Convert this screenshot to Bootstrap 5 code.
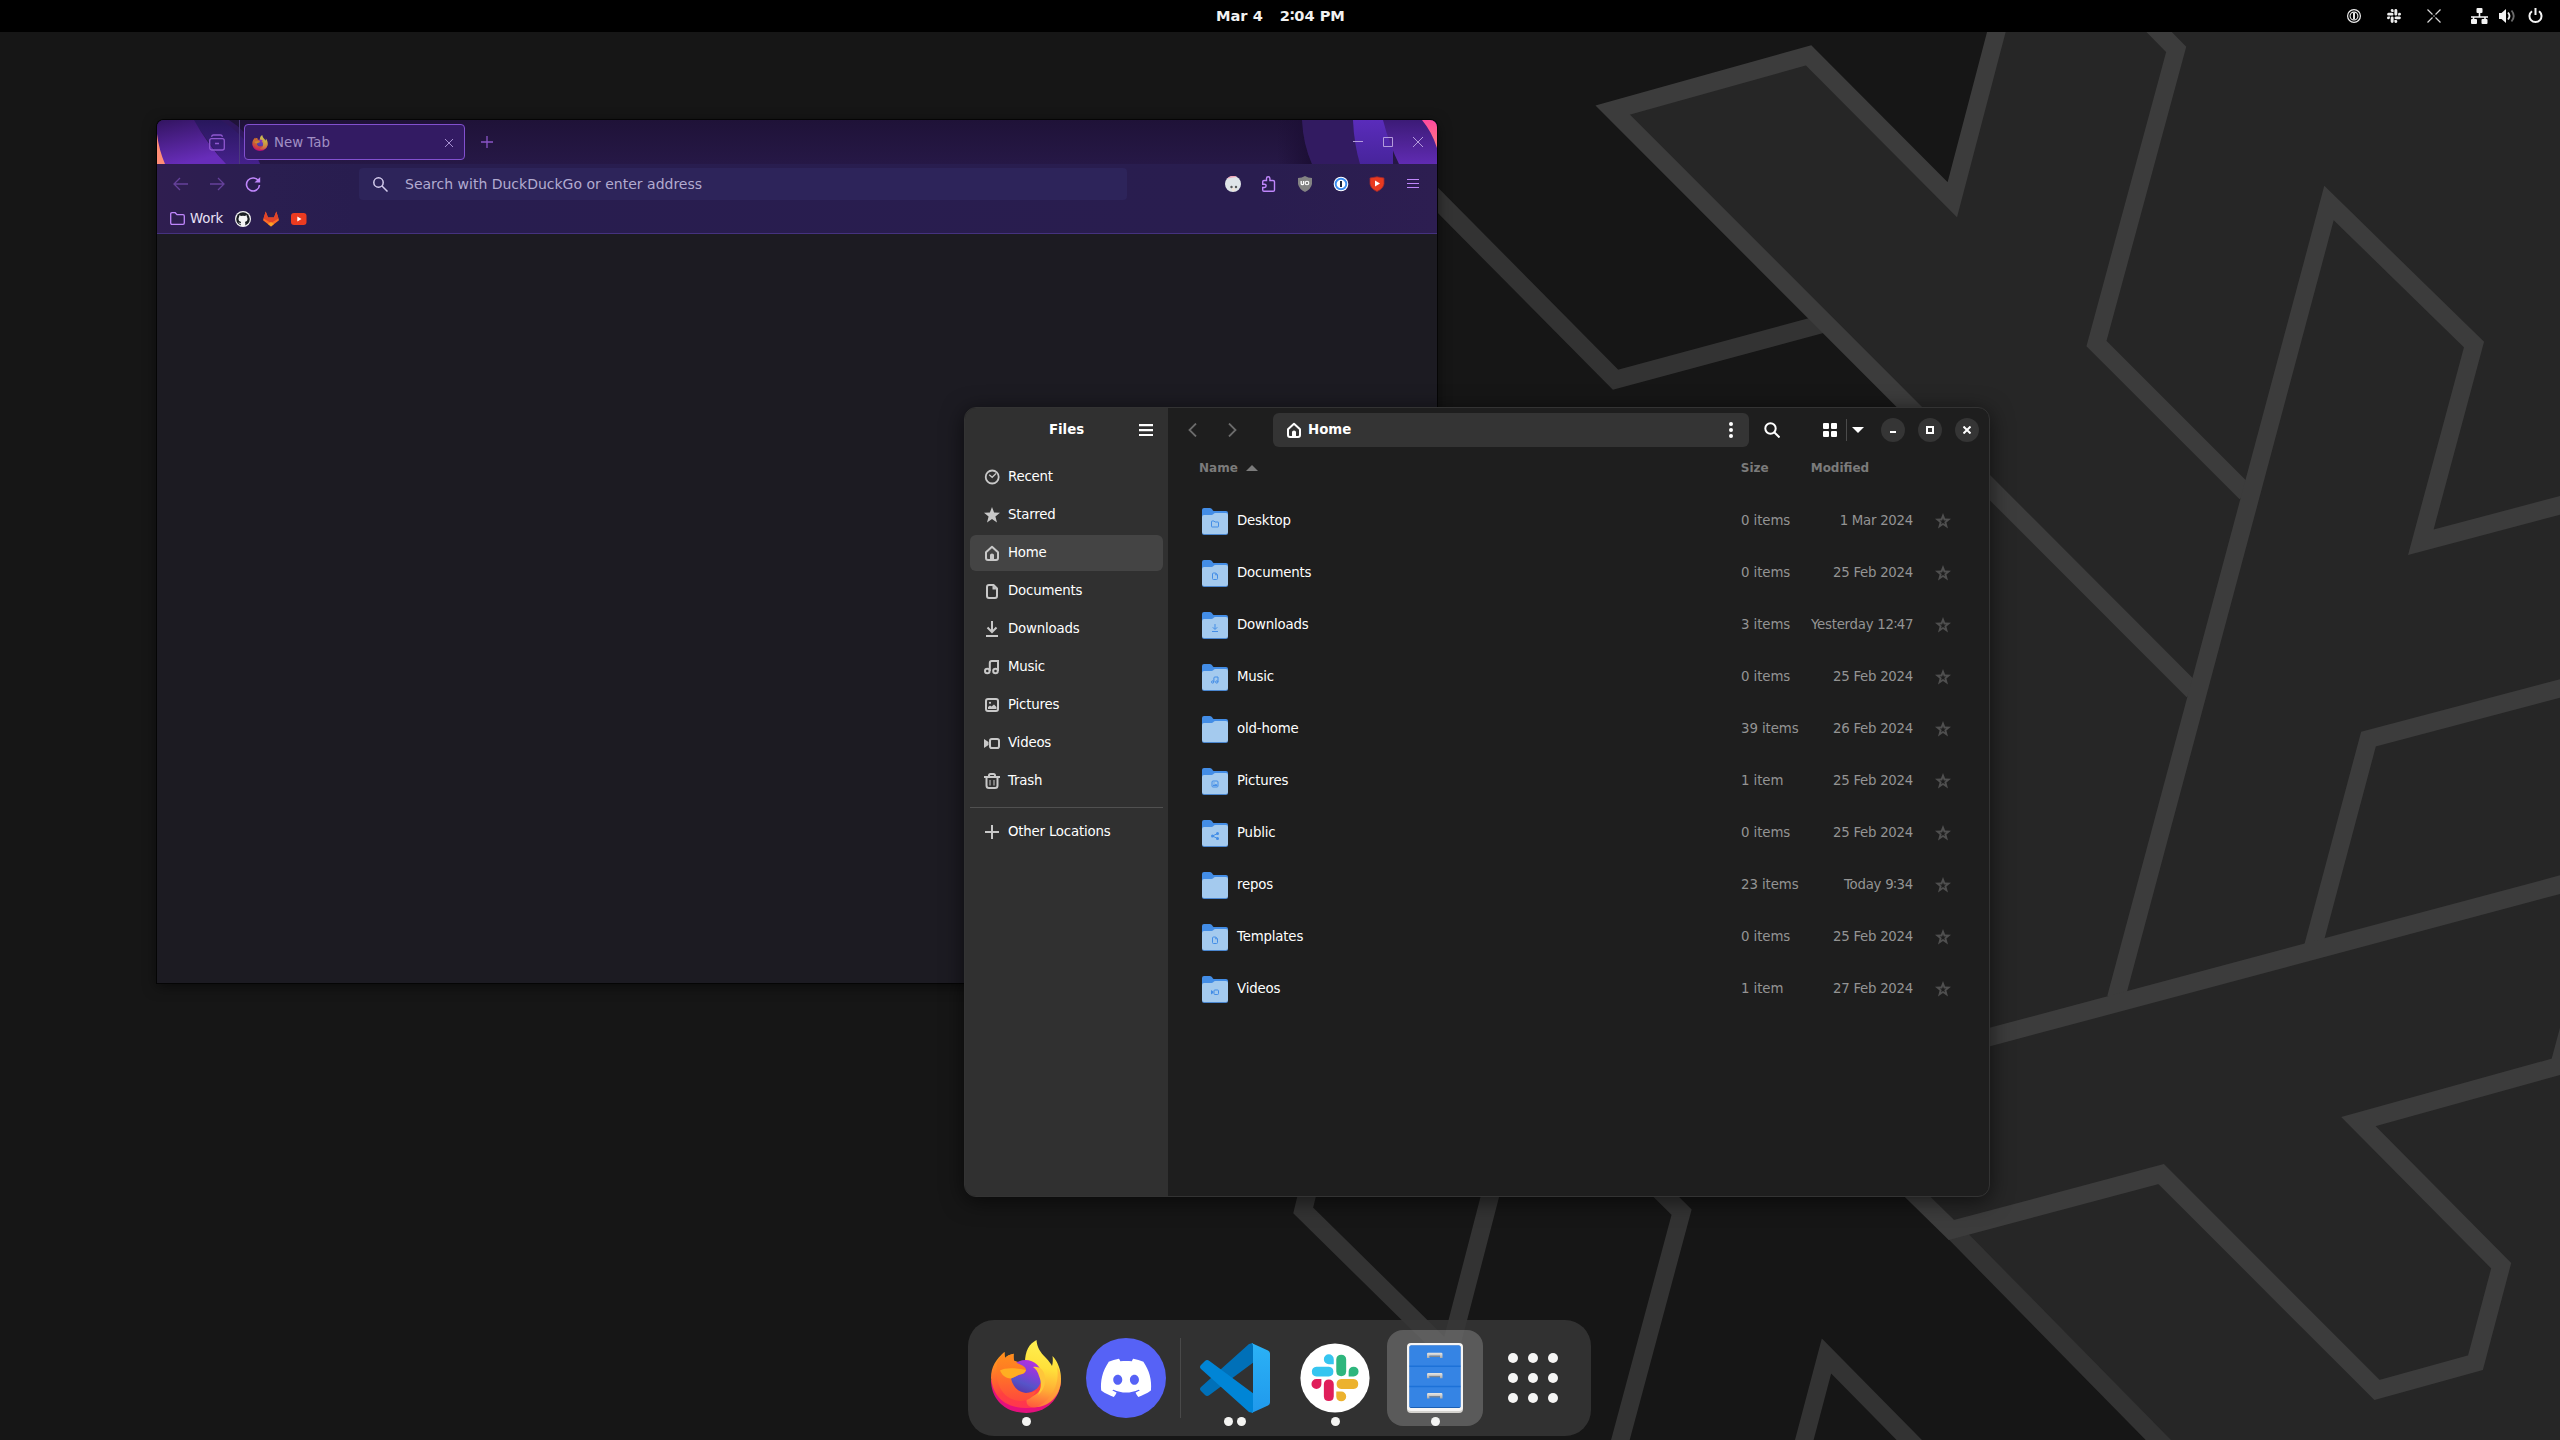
<!DOCTYPE html>
<html lang="en">
<head>
<meta charset="utf-8">
<title>Desktop</title>
<meta name="viewport" content="width=device-width, initial-scale=1">
<link href="https://cdn.jsdelivr.net/npm/bootstrap@5.3.0/dist/css/bootstrap.min.css" rel="stylesheet">
<style>
html,body{height:100%}
body{font-family:"DejaVu Sans",sans-serif;font-size:13.33px;line-height:16px;background:#161616;color:#fff;overflow:hidden}
svg{display:block;flex:none}
.desk{width:2560px;height:1440px}
.wall{left:0;top:0;z-index:0}
.topbar{height:32px;background:#000;z-index:5;font-size:14.6px;font-weight:700;color:#f2f2f2}
.tb-side{width:1216px}
.tb-clock{gap:17px}
.tb-tray{padding-right:17px}
/* browser window */
.ff{left:157px;top:120px;width:1280px;height:863px;background:#1c1b22;border-radius:7px 7px 0 0;box-shadow:0 0 0 1px #050505,0 3px 14px rgba(0,0,0,.55);z-index:1}
.ff-clip{border-radius:7px 7px 0 0}
.ff-tabs{height:44px;background:linear-gradient(#1f1238,#261846)}
.ff-art{left:0;top:0}
.ff-tabs>div{z-index:1}
.ff-lead{width:83px;padding-left:52px;border-right:1px solid #4b3a7c}
.ff-tab{width:221px;height:36px;margin-left:4px;border:1px solid #8250cf;border-radius:4px;background:#331b63;color:#a18fc4;padding:1px 11px 0 7px}
.ff-tab span{padding:1px 0 0 2px}
.ff-bars{height:70px;background:linear-gradient(90deg,#2f1e50 0,#2a1e50 110px,#281d4f 200px,#291d4f 1100px,#2d1e51 1280px);border-bottom:1px solid #45327f}
.ff-nav{height:40px;padding:4px 16px 4px 16px}
.ff-url{width:768px;height:32px;background:#2d245a;border-radius:4px;color:#b2abd0;font-size:14px;padding-left:14px;margin-left:98px}
.ff-marks{height:28px;padding:1px 0 0 13px;color:#e9e2f6;letter-spacing:-.15px}
/* file manager */
.fm{left:964px;top:407px;width:1026px;height:790px;border-radius:12px;background:#1e1e1e;border:1px solid #333;box-shadow:0 4px 22px rgba(0,0,0,.6);z-index:2}
.fm-side{width:203px;background:#303030;border-radius:11px 0 0 11px}
.fm-head{height:44px}
.fm-side .fm-head{padding-right:15px}
.fm-main-head{padding:0 10px 0 20px}
.fm-list{padding:7px 5px 0 5px;letter-spacing:-.2px}
.place{height:36px;margin-bottom:2px;padding-left:14px;gap:8px;border-radius:6px;color:#fff}
.place svg{color:#c8c8c8}
.place.sel{background:#444}
.rule-line{height:1px;background:#505050;margin:8px 0 6px}
.fm-title{margin-left:38px;padding-right:9px}
.pathbar{width:476px;height:34px;background:#343434;border-radius:6px;padding:0 13px 0 13px;font-weight:700}
.pathbar span{margin-left:6px}
.vsep{width:1px;height:22px;background:#4b4b4b;margin-left:9px}
.wbtns{gap:13px}
.wbtn{width:24px;height:24px;border-radius:50%;background:#353535}
.fm-cols{height:34px;font-size:12px;font-weight:700;color:#7b7b7b;padding:0 0 2px 31px}
.fm-files{padding-top:9px;letter-spacing:-.18px}
.frow{height:52px;padding-left:34px}
.frow .nm{width:513px;padding-left:9px}
.dim{color:#949494}
.c-size{width:70px;letter-spacing:-.08px}
.c-date{width:102px;text-align:right;white-space:nowrap;letter-spacing:-.27px}
.star{color:#4f4f4f;margin-left:22px}
.emblem{color:#438de6}
/* dock */
.dock{left:968px;top:1320px;width:623px;height:116px;border-radius:26px;background:rgba(55,55,55,.82);padding:10px 0 0 10px;z-index:3}
.app{width:96px;height:96px;border-radius:16px;position:relative}
.app+.app,.appgrid{margin-left:4px}
.appgrid{width:92px;height:96px}
.app.on{background:rgba(255,255,255,.2)}
.app .dots{left:0;right:0;bottom:0;gap:4px}
.app .dots i{width:9px;height:9px;border-radius:50%;background:#f4f4f2}
.dsep{width:1px;height:80px;background:#494949;margin:8px 6px 0}
</style>
<script src="https://cdn.jsdelivr.net/npm/bootstrap@5.3.0/dist/js/bootstrap.bundle.min.js"></script>
</head>
<body>
<!-- shared icon symbols -->
<svg width="0" height="0" class="position-absolute">
<defs>
<linearGradient id="gBody" x1=".15" y1=".1" x2=".45" y2="1"><stop offset="0" stop-color="#ff9a1f"/><stop offset=".35" stop-color="#ff6b2c"/><stop offset=".65" stop-color="#ff4040"/><stop offset="1" stop-color="#ff3550"/></linearGradient>
<linearGradient id="gGlobe" x1=".7" y1="0" x2=".3" y2="1"><stop offset="0" stop-color="#b62fe0"/><stop offset=".4" stop-color="#8340d8"/><stop offset=".7" stop-color="#5654c8"/><stop offset="1" stop-color="#5b35a8"/></linearGradient>
<linearGradient id="gHead" x1=".2" y1="0" x2=".2" y2="1"><stop offset="0" stop-color="#ff8f1c"/><stop offset=".4" stop-color="#ff7a24"/><stop offset="1" stop-color="#ff4a3c"/></linearGradient>
<linearGradient id="gFlame" x1=".4" y1="0" x2=".3" y2="1"><stop offset="0" stop-color="#fff152"/><stop offset=".4" stop-color="#ffe03a"/><stop offset=".72" stop-color="#ffac35"/><stop offset="1" stop-color="#ff5a3e"/></linearGradient>
<linearGradient id="gSlab" x1="0" y1="0" x2="0" y2="1"><stop offset="0" stop-color="#2bb2f6"/><stop offset="1" stop-color="#2099ec"/></linearGradient>
<linearGradient id="gHandle" x1="0" y1="0" x2="0" y2="1"><stop offset="0" stop-color="#e8e8e6"/><stop offset="1" stop-color="#a9a9a9"/></linearGradient>
<symbol id="firefox" viewBox="0 0 70 73">
<path fill="#e4107c" d="M0 40C0 60 15 73 35 73s35-14 35-34z"/>
<path fill="url(#gBody)" d="M0 38C0 27 5 19 13.500 12c0 2 0 4 .5 6 2-2 5-3.500 8.700-4.200-.3 2.500-.2 5 .3 6.700L50 30l18 18C62 62 49 68 35 68 16 68 2 58 0 38z"/>
<path fill="url(#gFlame)" d="M34 23C34 11 38 4 45.500 0 46 7 49 12 55 18c3 3 5 6 6 8 1-3 1-7 .5-10C67 22 70 30 70 39 70 54 60 66 44 67.500 38 68 34 64 36 58 48 56 54 46 51 34 47 28 41 24 34 23z"/>
<path fill="#ff9a3a" opacity=".45" d="M66 27c3 16-4 32-20 40 14-1 24-12 24-28 0-4-1-8-4-12z"/>
<circle cx="34.500" cy="36.500" r="16.500" fill="url(#gGlobe)"/>
<path fill="#ffc63a" d="M42 27c5-1 9 1 11 6 3 9 0 17-6 22 3-6 4-12 1-19-1-4-3-7-6-9z"/>
<path fill="url(#gHead)" d="M6 22C8 18 10 15 13.500 12c0 2 0 4 .5 6 2-2 5-3.500 8.700-4.200C22.400 16 22.500 18 23 21c3 3 12 4 12 9-1 3-3 4-6 4.500-3 1-6 3-9 4 2 9 8 14 15 14.500 4 0 7-1 10-2-3 7-9 10-16 10C12 60 3 44 6 22z"/>
<path fill="#ffae22" d="M9 30.500c5-3 14-3 26-.5-1 3-3 4-6 4.500-3 1-6 3-9 4C14 38 11 35 9 30.500z"/>
</symbol>
<symbol id="slackmono" viewBox="0 0 24 24"><path fill="currentColor" d="M5.042 15.165a2.528 2.528 0 1 1-2.520-2.520h2.520zM6.313 15.165a2.527 2.527 0 0 1 5.042 0v6.313a2.528 2.528 0 0 1-5.042 0zM8.834 5.042a2.528 2.528 0 1 1 2.521-2.520v2.520zM8.834 6.313a2.528 2.528 0 0 1 0 5.042H2.522a2.528 2.528 0 0 1 0-5.042zM18.956 8.834a2.528 2.528 0 1 1 2.522 2.521h-2.522zM17.688 8.834a2.528 2.528 0 0 1-5.043 0V2.522a2.528 2.528 0 0 1 5.043 0zM15.165 18.956a2.528 2.528 0 1 1-2.520 2.522v-2.522zM15.165 17.688a2.527 2.527 0 0 1 0-5.043h6.313a2.527 2.527 0 0 1 0 5.043z"/></symbol>
<symbol id="home" viewBox="0 0 16 16"><path fill="none" stroke="currentColor" stroke-width="2" stroke-linejoin="round" d="M2 7.200 8 1.700l6 5.500V13q0 2-2 2H4q-2 0-2-2z"/><path fill="currentColor" d="M6 15V10q0-1.500 2-1.500T10 10v5z"/></symbol>
<symbol id="recent" viewBox="0 0 16 16"><circle cx="8.200" cy="8" r="6.500" fill="none" stroke="currentColor" stroke-width="1.800"/><path d="m5.200 5.800 3 2.500L12 4.500" fill="none" stroke="currentColor" stroke-width="1.300"/></symbol>
<symbol id="starf" viewBox="0 0 16 16"><path fill="currentColor" d="M8 0l2.100 5.600 5.900.2-4.600 3.700L13 15.500 8 12.100l-5 3.400 1.600-6L0 5.800l5.900-.2z"/></symbol>
<symbol id="staro" viewBox="0 0 16 16"><path fill="currentColor" fill-rule="evenodd" d="M8 0l2.100 5.600 5.900.2-4.600 3.700L13 15.500 8 12.100l-5 3.400 1.600-6L0 5.800l5.900-.2zM8 5.200 7.200 7.500 4.900 7.600 6.700 9 6.100 11.300 8 10l1.900 1.300L9.300 9l1.800-1.400-2.300-.1z"/></symbol>
<symbol id="doc" viewBox="0 0 16 16"><path fill="none" stroke="currentColor" stroke-width="2" stroke-linejoin="round" d="M5 2h4.500L13 5.500V13q0 2-2 2H5q-2 0-2-2V4q0-2 2-2z"/><path fill="currentColor" d="M8.500 2v4.500H13z"/></symbol>
<symbol id="down" viewBox="0 0 16 16"><path fill="none" stroke="currentColor" stroke-width="2" d="M8 0v10M3.500 6.500 8 11l4.500-4.500M2 15h12"/></symbol>
<symbol id="music" viewBox="0 0 16 16"><g fill="none" stroke="currentColor" stroke-width="2"><circle cx="3.300" cy="12" r="2.300"/><circle cx="11.500" cy="12" r="2.300"/><path d="M5.800 12V4q0-2 2-2H14v10"/></g></symbol>
<symbol id="pic" viewBox="0 0 16 16"><rect x="2" y="2" width="12" height="12" rx="2" fill="none" stroke="currentColor" stroke-width="2"/><path fill="currentColor" d="M4 12V10l2-1.500 1.500 1L10 7.500l2.500 2.500v2z"/><circle cx="6" cy="5.800" r="1.100" fill="currentColor"/></symbol>
<symbol id="video" viewBox="0 0 16 16"><rect x="6" y="4" width="9" height="9" rx="1.800" fill="none" stroke="currentColor" stroke-width="2"/><path fill="currentColor" d="M0 4l4.500 3v3L0 13z"/></symbol>
<symbol id="trash" viewBox="0 0 16 16"><path fill="none" stroke="currentColor" stroke-width="2" d="M0 4h16M5 4V2.500Q5 1 6.500 1h3Q11 1 11 2.500V4M2.500 4v8.500q0 2.500 2.500 2.500h6q2.500 0 2.500-2.500V4"/><path stroke="currentColor" d="M6 7v5.500M10 7v5.500"/></symbol>
<symbol id="plus" viewBox="0 0 16 16"><path stroke="currentColor" stroke-width="2" d="M8 1v14M1 8h14"/></symbol>
<symbol id="share" viewBox="0 0 16 16"><g fill="currentColor"><circle cx="3" cy="8" r="3"/><circle cx="13" cy="3" r="3"/><circle cx="13" cy="13" r="3"/></g><path d="M13 3 3 8l10 5" fill="none" stroke="currentColor" stroke-width="2"/></symbol>
<symbol id="desk" viewBox="0 0 16 16"><path fill="none" stroke="currentColor" stroke-width="2" d="M1 3q0-1 1-1h4l2 2h6q1 0 1 1v8q0 1-1 1H2q-1 0-1-1z"/></symbol>
<symbol id="folder" viewBox="0 0 26 27"><path fill="#438de6" d="M0 2q0-2 2-2h6q1.500 0 2.300 1.500Q11 3 12 3h12q2 0 2 2v12H0z"/><path fill="#4a86cf" d="M0 9h26v16q0 2-2 2H2q-2 0-2-2z"/><path fill="#a4caee" d="M0 9q0-2 2-2h7.500q1 0 1.700-.8Q12.200 5 13.500 5H24q2 0 2 2v17q0 2-2 2H2q-2 0-2-2z"/></symbol>
</defs>
</svg>

<div class="desk position-relative overflow-hidden">
  <svg class="wall position-absolute" width="2560" height="1440">
    <path fill="#262626" d="M1612.700 110 1808.600 55.300 1952.300 199.700 2010-20H2600V1460H2178L1916 1197 1700 800 1916 414z"/>
    <g fill="none" stroke="#333" stroke-width="18" stroke-miterlimit="10">
      <path d="M1400 162 1615.600 379.800 1822 324"/>
      <path d="M1318 1150 1303.200 1210.400 1449 1354 1502 1150"/>
      <path d="M1620 1151 1681.600 1212.200 1615 1460"/>
      <path d="M1799 1460 1826.500 1356 1929 1460"/>
      <path d="M1954 1232 2178 1460"/>
    </g>
    <g fill="none" stroke="#3c3c3c" stroke-width="18" stroke-miterlimit="10">
      <path d="M2010-20 1952.300 199.700 1808.600 55.300 1612.700 110 2193 691"/>
      <path d="M2108-20 2176.200 49.400 2096.500 343.500 2246 493"/>
      <path d="M2116 998 2329 203 2474 344.600 2420.800 542.300 2580 500"/>
      <path d="M2600 678 2368.500 739 2313 947"/>
      <path d="M1960 1045 2600 874"/>
      <path d="M2580 988 2559 1066 2358.400 1121.500 2501.200 1265.700 2475.500 1362.600 2377.100 1390 2161.200 1174.100 1951.400 1230 1880 1160"/>
    </g>
  </svg>

  <nav class="topbar d-flex align-items-center position-relative">
    <div class="tb-side"></div>
    <div class="tb-clock d-flex"><span>Mar 4</span><span>2∶04 PM</span></div>
    <div class="tb-tray d-flex align-items-center ms-auto">
      <svg width="14" height="14" viewBox="0 0 14 14"><circle cx="7" cy="7" r="6.400" fill="none" stroke="#eee" stroke-width="1.200"/><circle cx="7" cy="7" r="3.900" fill="none" stroke="#eee" stroke-width="1.100"/><path fill="#fff" d="M6.100 4h1.800v6H6.100z"/></svg>
      <svg width="14" height="14" style="margin-left:26px;color:#eee"><use href="#slackmono"/></svg>
      <svg width="14" height="14" viewBox="0 0 14 14" style="margin-left:26px"><path d="M.5.500 5.500 5.500M8.500 8.500l5 5M13.500.500l-5 5M5.500 8.500l-5 5" stroke="#d8d8d8" stroke-width="1.200"/><circle cx="7" cy="7" r="1" fill="#777"/></svg>
      <svg width="17" height="17" viewBox="0 0 17 17" style="margin-left:30px"><g fill="#f4f4f4"><rect x="5.500" y="0" width="6" height="5" rx="1"/><rect x="0" y="11" width="6" height="5" rx="1"/><rect x="10.500" y="11" width="6" height="5" rx="1"/></g><path d="M8.500 4v5M0 9h17M2.500 8.500V12M14 8.500V12" stroke="#f4f4f4" stroke-width="1.600"/></svg>
      <svg width="17" height="16" viewBox="0 0 17 16" style="margin-left:11px"><path fill="#f4f4f4" d="M0 5h2.500L7 1v14l-4.500-4H0z"/><path d="M9 4.500q3 3.500 0 7" fill="none" stroke="#f4f4f4" stroke-width="1.800"/><path d="M12.500 2.500q4.500 5.500 0 11" fill="none" stroke="#6a6a6a" stroke-width="1.800"/></svg>
      <svg width="15" height="16" viewBox="0 0 15 16" style="margin-left:12px"><path d="M4 3.200a6 6 0 1 0 7 0M7.500 0v7" fill="none" stroke="#f4f4f4" stroke-width="2"/></svg>
    </div>
  </nav>

  <!-- browser -->
  <section class="ff position-absolute"><div class="ff-clip overflow-hidden">
    <div class="ff-tabs d-flex align-items-center position-relative">
      <svg class="ff-art position-absolute" width="1280" height="44">
        <defs>
          <linearGradient id="a1" x1="0" y1="0" x2=".35" y2="1"><stop offset="0" stop-color="#321460"/><stop offset="1" stop-color="#682dba"/></linearGradient>
          <linearGradient id="a2" x1="0" y1="0" x2="0" y2="1"><stop offset="0" stop-color="#28175c"/><stop offset="1" stop-color="#45218c"/></linearGradient>
          <linearGradient id="a3" x1="0" y1="0" x2="0" y2="1"><stop offset="0" stop-color="#5a2cbb"/><stop offset="1" stop-color="#47249b"/></linearGradient>
          <linearGradient id="a4" x1="0" y1="0" x2="0" y2="1"><stop offset="0" stop-color="#3c1b77"/><stop offset="1" stop-color="#602bb2"/></linearGradient>
          <linearGradient id="a5" x1="0" y1="0" x2="0" y2="1"><stop offset="0" stop-color="#ff4a9e"/><stop offset="1" stop-color="#ff7a80"/></linearGradient>
          <linearGradient id="a6"><stop offset="0" stop-color="#1d0f36" stop-opacity="0"/><stop offset="1" stop-color="#1b0e34"/></linearGradient>
        </defs>
        <path fill="#34196a" d="M0 0h72q26 16 31 44H0z" opacity=".75"/>
        <path fill="url(#a2)" d="M36 0h28q28 18 39 44H68z"/>
        <path fill="url(#a1)" d="M0 0h37Q50 24 69 44H0z"/>
        <path fill="#ff8d76" d="M0 14q2 16 8 30H0z"/>
        <path fill="url(#a6)" d="M1120 0h25q2 24 10 44h-35z"/>
        <path fill="#321b61" d="M1145 0h60v44h-50q-9-20-10-44z"/>
        <path fill="url(#a3)" d="M1196 0h40v44h-33q-6-20-7-44z"/>
        <path fill="url(#a4)" d="M1226 0h54v44h-38q-10-20-16-44z"/>
        <path fill="url(#a5)" d="M1265 0h15v28q-5-16-15-28z"/>
      </svg>
      <div class="ff-lead h-100 d-flex align-items-center"><svg width="16" height="17" viewBox="0 0 16 17" fill="none" stroke="#8f58d0" stroke-width="1.300"><path d="M2.500 2.700Q3 1 4.500 1h7Q13 1 13.500 2.700M6 9.500h4"/><rect x=".700" y="4.700" width="14.600" height="11.300" rx="2"/></svg></div>
      <div class="ff-tab d-flex align-items-center"><svg width="16" height="16" opacity=".75"><use href="#firefox"/></svg><span class="ms-1">New Tab</span>
        <svg class="ms-auto" width="8" height="8" viewBox="0 0 8 8" stroke="#a58fd0"><path d="M0 0l8 8M8 0 0 8"/></svg></div>
      <div style="margin-left:16px"><svg width="12" height="12" stroke="#8a55c8" stroke-width="1.300"><path d="M6 0v12M0 6h12"/></svg></div>
      <div class="ms-auto d-flex align-items-center" style="gap:20px;padding-right:14px">
        <svg width="10" height="10" stroke="#b39bdc"><path d="M0 4.500h10"/></svg>
        <svg width="10" height="10" stroke="#b39bdc" fill="none"><path d="M.5.500h9v9h-9z"/></svg>
        <svg width="10" height="10" stroke="#b39bdc"><path d="M0 0l10 10M10 0 0 10"/></svg>
      </div>
    </div>
    <div class="ff-bars">
      <div class="ff-nav d-flex align-items-center">
        <svg width="16" height="14" viewBox="0 0 16 14" fill="none" stroke="#65419a" stroke-width="1.300"><path d="M15 7H1.500M7 1 1 7l6 6"/></svg>
        <svg width="16" height="14" viewBox="0 0 16 14" fill="none" stroke="#65419a" stroke-width="1.300" style="margin-left:20px"><path d="M1 7h13.500M9 1l6 6-6 6"/></svg>
        <svg width="16" height="16" viewBox="0 0 16 16" fill="none" stroke="#bf86fb" stroke-width="1.600" style="margin-left:20px"><path d="M13.500 5A6.500 6.500 0 1 0 14.500 9"/><path fill="#bf86fb" stroke="none" d="M15.200 1v5.500H9.500z"/></svg>
        <div class="ff-url d-flex align-items-center"><svg width="15" height="15" viewBox="0 0 15 15" fill="none" stroke="#d5cdee" stroke-width="1.500"><circle cx="5.500" cy="5.500" r="4.700"/><path d="m9 9 5.500 5.500"/></svg><span style="margin-left:17px">Search with DuckDuckGo or enter address</span></div>
        <div class="ms-auto d-flex align-items-center" style="gap:20px">
          <svg width="16" height="16"><circle cx="8" cy="8" r="8" fill="#dfe4e8"/><path fill="#f4a6b8" d="M2 2.700A8 8 0 0 1 12 1Q7 1 2 2.700z"/><circle cx="6.500" cy="11" r="1.200" fill="#555"/><circle cx="11" cy="11" r="1.200" fill="#555"/><path fill="#efe2d8" d="M7 12h3v3H7z"/></svg>
          <svg width="16" height="16" viewBox="0 0 16 16" fill="none" stroke="#bf86fb" stroke-width="1.400"><path d="M1.700 7V5.800Q1.700 4.500 3 4.500H5.500V2.500a1.700 1.700 0 0 1 3.400 0v2H12q1.500 0 1.500 1.300V14q0 1.300-1.300 1.300H3Q1.700 15.300 1.700 14V11.500H3.500a1.600 1.600 0 0 0 0-3.300H1.700V7"/></svg>
          <svg width="16" height="16"><path fill="#838383" d="M8 0q3 2 7 2v6q-1 5-7 8-6-3-7-8V2q4 0 7-2z"/><path d="M4.200 5v2.500q0 1.200 1.200 1.200t1.200-1.200V5" fill="none" stroke="#fff" stroke-width="1.300"/><circle cx="10" cy="7" r="1.800" fill="none" stroke="#fff" stroke-width="1.100"/></svg>
          <svg width="16" height="16"><circle cx="8" cy="8" r="7.300" fill="#fff"/><circle cx="8" cy="8" r="5.300" fill="none" stroke="#3a8cf0" stroke-width="1.900"/><path fill="#1c2740" d="M7 5h2v6H7z"/></svg>
          <svg width="16" height="16"><path fill="#e83a20" stroke="#9e2a30" stroke-width=".8" d="M8 .8 15 2v6q-1 5-7 7.500Q2 13 1 8V2z"/><path fill="#fff" d="M6 4.500 11 7.500 6 10.500z"/></svg>
          <svg width="16" height="16" stroke="#bf86fb" stroke-width="1.200"><path d="M2 3.500h12M2 7.500h12M2 11.500h12"/></svg>
        </div>
      </div>
      <div class="ff-marks d-flex align-items-center">
        <svg width="15" height="13" viewBox="0 0 15 13" fill="none" stroke="#bf86fb" stroke-width="1.300"><path d="M.700 2Q.700.700 2 .7h3.200l1.800 2h6q1.300 0 1.300 1.300v7q0 1.300-1.300 1.300H2Q.700 12.300.700 11z"/></svg>
        <span style="margin-left:5px">Work</span>
        <svg width="16" height="16" viewBox="0 0 16 16" style="margin-left:12px"><circle cx="8" cy="8" r="8" fill="#f5f5f5"/><circle cx="8" cy="8" r="6.800" fill="#1b1f24"/><path fill="#f5f5f5" d="M4.200 6Q4 5.200 4.300 4.300q.9.100 1.700.8 2-.5 4 0 .8-.7 1.700-.8.300.9.100 1.700.7.800.7 1.800 0 2.800-2.700 3.200.5.500.5 1.300v2.600H5.700v-2.200q-1.700.3-2.400-1.200l1.300.3q.7.500 1.200.1 0-.5.400-.9Q3.500 10.600 3.500 7.800q0-1 .7-1.800z"/></svg>
        <svg width="16" height="16" viewBox="0 0 16 16" style="margin-left:12px"><path fill="#fc6d26" d="M8 15.500 0 9.300 2.700.500 5 6.500h6L13.300.500 16 9.300z"/><path fill="#e24329" d="M2.700.500 5 6.500h6L13.300.500l2.200 7L8 12 .500 7.500z"/><path fill="#fca326" d="m8 15.500-3-2.400L8 11l3 2.100z"/></svg>
        <svg width="16" height="12" viewBox="0 0 16 12" style="margin-left:12px"><rect width="15.500" height="12" rx="3" fill="#eb3b20"/><path fill="#fff" d="M6.300 3.500 10.500 6 6.300 8.500z"/></svg>
      </div>
    </div>
  </div></section>

  <!-- file manager -->
  <section class="fm position-absolute d-flex">
    <aside class="fm-side">
      <div class="fm-head d-flex align-items-center"><strong class="flex-fill text-center fm-title">Files</strong>
        <svg width="14" height="12" fill="#fff"><path d="M0 0h14v2.300H0zM0 5h14v2.300H0zM0 10h14v2H0z"/></svg></div>
      <div class="fm-list">
        <div class="place d-flex align-items-center"><svg width="16" height="16"><use href="#recent"/></svg>Recent</div>
        <div class="place d-flex align-items-center"><svg width="16" height="16"><use href="#starf"/></svg>Starred</div>
        <div class="place sel d-flex align-items-center"><svg width="16" height="16"><use href="#home"/></svg>Home</div>
        <div class="place d-flex align-items-center"><svg width="16" height="16"><use href="#doc"/></svg>Documents</div>
        <div class="place d-flex align-items-center"><svg width="16" height="16"><use href="#down"/></svg>Downloads</div>
        <div class="place d-flex align-items-center"><svg width="16" height="16"><use href="#music"/></svg>Music</div>
        <div class="place d-flex align-items-center"><svg width="16" height="16"><use href="#pic"/></svg>Pictures</div>
        <div class="place d-flex align-items-center"><svg width="16" height="16"><use href="#video"/></svg>Videos</div>
        <div class="place d-flex align-items-center"><svg width="16" height="16"><use href="#trash"/></svg>Trash</div>
        <div class="rule-line"></div>
        <div class="place d-flex align-items-center"><svg width="16" height="16"><use href="#plus"/></svg>Other Locations</div>
      </div>
    </aside>
    <div class="flex-fill">
      <div class="fm-head fm-main-head d-flex align-items-center">
        <svg width="9" height="14" viewBox="0 0 9 14" fill="none" stroke="#6c6c6c" stroke-width="1.800"><path d="M8 .5 1.500 7 8 13.500"/></svg>
        <svg width="9" height="14" viewBox="0 0 9 14" fill="none" stroke="#6c6c6c" stroke-width="1.800" style="margin-left:31px"><path d="M1 .5 7.500 7 1 13.500"/></svg>
        <div class="pathbar d-flex align-items-center" style="margin-left:36px"><svg width="16" height="16"><use href="#home"/></svg><span>Home</span>
          <svg class="ms-auto" width="10" height="16" fill="#fff"><circle cx="5" cy="2" r="2"/><circle cx="5" cy="8" r="2"/><circle cx="5" cy="14" r="2"/></svg></div>
        <svg width="16" height="16" viewBox="0 0 16 16" fill="none" stroke="#fff" stroke-width="2" style="margin-left:15px"><circle cx="6.500" cy="6.500" r="5.200"/><path d="m10.500 10.500 5 5"/></svg>
        <svg width="14" height="14" fill="#fff" style="margin-left:43px"><rect width="6" height="6" rx="1"/><rect x="8" width="6" height="6" rx="1"/><rect y="8" width="6" height="6" rx="1"/><rect x="8" y="8" width="6" height="6" rx="1"/></svg>
        <div class="vsep"></div>
        <svg width="12" height="6" fill="#fff" style="margin-left:5px"><path d="M0 0h12L6 6z"/></svg>
        <div class="wbtns d-flex ms-auto">
          <div class="wbtn d-flex align-items-center justify-content-center"><svg width="8" height="8"><path fill="#fff" d="M1 5h6v2H1z"/></svg></div>
          <div class="wbtn d-flex align-items-center justify-content-center"><svg width="8" height="8" fill="none" stroke="#fff" stroke-width="2"><path d="M1 1h6v6H1z"/></svg></div>
          <div class="wbtn d-flex align-items-center justify-content-center"><svg width="8" height="8" stroke="#fff" stroke-width="2"><path d="M.5.500l7 7M7.500.500l-7 7"/></svg></div>
        </div>
      </div>
      <div class="fm-cols d-flex align-items-center"><span>Name</span><svg width="12" height="6" fill="#7b7b7b" style="margin-left:8px"><path d="M0 6h12L6 0z"/></svg>
        <span style="margin-left:483px">Size</span><span style="margin-left:42px">Modified</span></div>
      <div class="fm-files" id="files"></div>
    </div>
  </section>

  <!-- dock -->
  <div class="dock position-absolute d-flex align-items-start">
    <div class="app d-flex align-items-center justify-content-center"><svg width="70" height="73" style="margin-bottom:3px"><use href="#firefox"/></svg><div class="dots position-absolute d-flex justify-content-center"><i></i></div></div>
    <div class="app d-flex align-items-center justify-content-center"><svg width="80" height="80"><circle cx="40" cy="40" r="40" fill="#5662f6"/><path fill="#fff" transform="translate(15 14.700) scale(2.090)" d="M20.317 4.370a19.791 19.791 0 0 0-4.885-1.515.074.074 0 0 0-.079.037c-.211.375-.445.865-.608 1.250-1.845-.276-3.680-.276-5.487 0-.164-.393-.406-.874-.618-1.250a.077.077 0 0 0-.079-.037 19.736 19.736 0 0 0-4.885 1.515.070.070 0 0 0-.032.028C.533 9.046-.319 13.580.099 18.058a.082.082 0 0 0 .031.056c2.053 1.508 4.041 2.423 5.993 3.029a.078.078 0 0 0 .084-.028c.462-.630.873-1.295 1.226-1.994a.076.076 0 0 0-.042-.106c-.653-.248-1.274-.550-1.872-.892a.077.077 0 0 1-.008-.128c.126-.094.252-.192.372-.291a.074.074 0 0 1 .078-.011c3.928 1.793 8.180 1.793 12.061 0a.074.074 0 0 1 .079.010c.120.099.246.198.373.292a.077.077 0 0 1-.007.128 12.299 12.299 0 0 1-1.873.891.077.077 0 0 0-.041.107c.360.698.772 1.363 1.225 1.993a.076.076 0 0 0 .084.029c1.961-.607 3.950-1.522 6.002-3.029a.077.077 0 0 0 .031-.055c.500-5.177-.838-9.674-3.549-13.660a.061.061 0 0 0-.031-.029zM8.020 15.331c-1.183 0-2.157-1.086-2.157-2.419 0-1.333.956-2.419 2.157-2.419 1.211 0 2.176 1.095 2.157 2.419 0 1.333-.956 2.419-2.157 2.419zm7.975 0c-1.183 0-2.157-1.086-2.157-2.419 0-1.333.955-2.419 2.157-2.419 1.211 0 2.176 1.095 2.157 2.419 0 1.333-.946 2.419-2.157 2.419z"/></svg></div>
    <div class="dsep"></div>
    <div class="app d-flex align-items-center justify-content-center"><svg width="70" height="70" viewBox="0 0 70 70"><path fill="#0070b8" d="M49 1 1 44q-2 2 0 4l4 4q2 2 4.500 0L53 19.700V0z"/><path fill="#0085d6" d="M49 69 1 26q-2-2 0-4l4-4q2-2 4.500 0L53 50.300V70z"/><path fill="url(#gSlab)" d="M51.500 0 68 7.500q2 1 2 3v49q0 2-2 3L51.500 70Q53 69.500 53 67V3Q53 1 51.500 0z"/></svg><div class="dots position-absolute d-flex justify-content-center"><i></i><i></i></div></div>
    <div class="app d-flex align-items-center justify-content-center"><svg width="70" height="70" viewBox="0 0 70 70"><circle cx="35" cy="35" r="34.600" fill="#fff"/><g transform="translate(11.500 11.300) scale(1.960)"><path fill="#e01e5a" d="M5.042 15.165a2.528 2.528 0 1 1-2.520-2.520h2.520zM6.313 15.165a2.527 2.527 0 0 1 5.042 0v6.313a2.528 2.528 0 0 1-5.042 0z"/><path fill="#36c5f0" d="M8.834 5.042a2.528 2.528 0 1 1 2.521-2.520v2.520zM8.834 6.313a2.528 2.528 0 0 1 0 5.042H2.522a2.528 2.528 0 0 1 0-5.042z"/><path fill="#2eb67d" d="M18.956 8.834a2.528 2.528 0 1 1 2.522 2.521h-2.522zM17.688 8.834a2.528 2.528 0 0 1-5.043 0V2.522a2.528 2.528 0 0 1 5.043 0z"/><path fill="#ecb22e" d="M15.165 18.956a2.528 2.528 0 1 1-2.520 2.522v-2.522zM15.165 17.688a2.527 2.527 0 0 1 0-5.043h6.313a2.527 2.527 0 0 1 0 5.043z"/></g></svg><div class="dots position-absolute d-flex justify-content-center"><i></i></div></div>
    <div class="app on d-flex align-items-center justify-content-center"><svg width="56" height="70" viewBox="0 0 56 70"><rect y="3" width="56" height="67" rx="4" fill="#d5d3cf"/><rect width="56" height="68" rx="4" fill="#f6f5f4"/><rect x="2.500" y="2.500" width="51" height="62.500" rx="1.500" fill="#1a5fb4"/><path fill="#3584e4" d="M4 2.500h48q1.500 0 1.500 1.500v60h-51V4q0-1.500 1.500-1.500z"/><path fill="#1c71d8" d="M2.500 22.500h51V24h-51zM2.500 42.700h51v1.500h-51z"/><g id="hd"><path fill="url(#gHandle)" d="M20 11q0-1.300 1.300-1.300h12.900q1.300 0 1.300 1.300v4H33v-2.300H22.500V15H20z"/><path fill="#7d8791" d="M22.500 12.700H33V14H22.500z"/></g><use href="#hd" y="20.200"/><use href="#hd" y="40.400"/></svg><div class="dots position-absolute d-flex justify-content-center"><i></i></div></div>
    <div class="appgrid d-flex align-items-center justify-content-center"><svg width="50" height="50" fill="#f6f5f4"><circle cx="5" cy="5" r="5"/><circle cx="25" cy="5" r="5"/><circle cx="45" cy="5" r="5"/><circle cx="5" cy="25" r="5"/><circle cx="25" cy="25" r="5"/><circle cx="45" cy="25" r="5"/><circle cx="5" cy="45" r="5"/><circle cx="25" cy="45" r="5"/><circle cx="45" cy="45" r="5"/></svg></div>
  </div>
</div>
<script>
// name, emblem symbol, size, modified
const files = [
  ['Desktop','desk','0 items','1 Mar 2024'],
  ['Documents','doc','0 items','25 Feb 2024'],
  ['Downloads','down','3 items','Yesterday 12∶47'],
  ['Music','music','0 items','25 Feb 2024'],
  ['old-home','','39 items','26 Feb 2024'],
  ['Pictures','pic','1 item','25 Feb 2024'],
  ['Public','share','0 items','25 Feb 2024'],
  ['repos','','23 items','Today 9∶34'],
  ['Templates','doc','0 items','25 Feb 2024'],
  ['Videos','video','1 item','27 Feb 2024']
];
document.getElementById('files').innerHTML = files.map(([name, emblem, size, date]) =>
  `<div class="frow d-flex align-items-center"><svg width="26" height="27"><use href="#folder"/>${emblem ? `<use class="emblem" href="#${emblem}" x="9" y="12" width="8" height="8"/>` : ''}</svg><span class="nm">${name}</span><span class="c-size dim">${size}</span><span class="c-date dim">${date}</span><svg class="star" width="16" height="16"><use href="#staro"/></svg></div>`
).join('');
</script>
</body>
</html>
